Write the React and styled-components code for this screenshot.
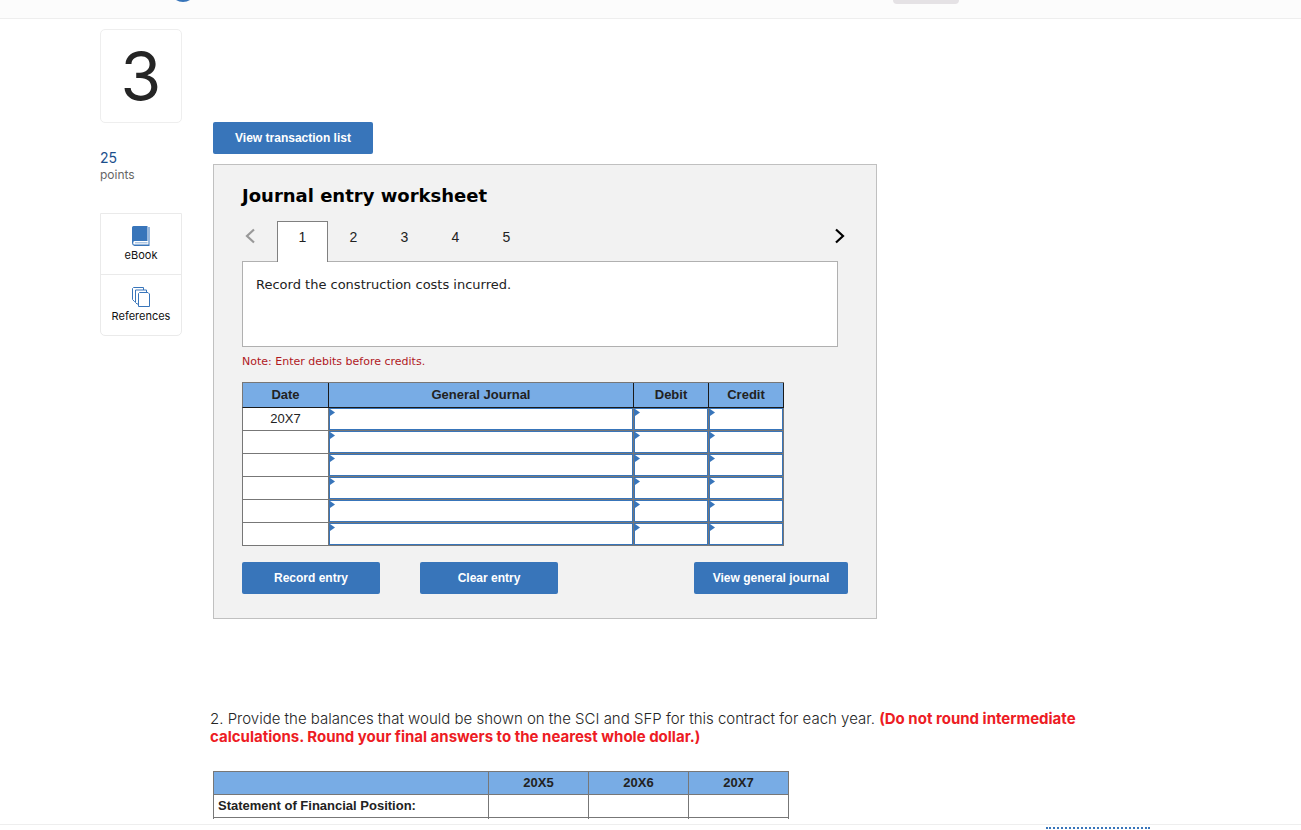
import React, { useState } from 'react';
import styled, { createGlobalStyle } from 'styled-components';

const TABS = [1, 2, 3, 4, 5];
const ENTRY_ROWS = ['20X7', '', '', '', '', ''];
const YEARS = ['20X5', '20X6', '20X7'];

export default function App() {
  const [activeTab, setActiveTab] = useState(1);

  return (
    <Page>
      <GlobalStyle />
      <TopBar>
        <LogoDot width="16" height="2" viewBox="0 0 16 2" aria-hidden="true">
          <path d="M1 0h14q-3 2-7 2T1 0z" fill="#3875ba" />
        </LogoDot>
        <TopPill />
      </TopBar>

      <Content>
        <Sidebar>
          <QuestionNumber>3</QuestionNumber>
          <Points>25</Points>
          <PointsLabel>points</PointsLabel>
          <Tools>
            <ToolButton type="button">
              <BookIcon />
              eBook
            </ToolButton>
            <ToolButton type="button">
              <ReferencesIcon />
              References
            </ToolButton>
          </Tools>
        </Sidebar>

        <Main>
          <WorksheetArea>
            <BlueButton type="button" $width={160}>View transaction list</BlueButton>
            <Worksheet>
              <Title>Journal entry worksheet</Title>
              <TabRow>
                <ArrowButton type="button" aria-label="Previous" disabled>
                  <Chevron d="M9 1.5 2 8l7 6.5" />
                </ArrowButton>
                <TabList>
                  {TABS.map((tab) => (
                    <Tab
                      key={tab}
                      type="button"
                      $active={tab === activeTab}
                      onClick={() => setActiveTab(tab)}
                    >
                      {tab}
                    </Tab>
                  ))}
                </TabList>
                <ArrowButton type="button" aria-label="Next">
                  <Chevron d="M2 1.5 9 8l-7 6.5" />
                </ArrowButton>
              </TabRow>
              <Description>Record the construction costs incurred.</Description>
              <Note>Note: Enter debits before credits.</Note>

              <JournalTable>
                <colgroup>
                  <Col $width={87} />
                  <Col $width={305} />
                  <Col $width={75} />
                  <Col $width={75} />
                </colgroup>
                <thead>
                  <tr>
                    <JournalHead>Date</JournalHead>
                    <JournalHead>General Journal</JournalHead>
                    <JournalHead>Debit</JournalHead>
                    <JournalHead>Credit</JournalHead>
                  </tr>
                </thead>
                <tbody>
                  {ENTRY_ROWS.map((date, index) => (
                    <tr key={index}>
                      <DateCell>{date}</DateCell>
                      <EntryCell label={`General Journal ${index + 1}`} />
                      <EntryCell label={`Debit ${index + 1}`} />
                      <EntryCell label={`Credit ${index + 1}`} />
                    </tr>
                  ))}
                </tbody>
              </JournalTable>

              <Actions>
                <ActionGroup>
                  <BlueButton type="button" $width={138}>Record entry</BlueButton>
                  <BlueButton type="button" $width={138}>Clear entry</BlueButton>
                </ActionGroup>
                <BlueButton type="button" $width={154}>View general journal</BlueButton>
              </Actions>
            </Worksheet>
          </WorksheetArea>

          <Question>
            2. Provide the balances that would be shown on the SCI and SFP for this contract for each year.{' '}
            <strong>
              (Do not round intermediate calculations. Round your final answers to the nearest whole dollar.)
            </strong>
          </Question>

          <BalanceTable>
            <colgroup>
              <Col $width={276} />
              <Col $width={100} />
              <Col $width={100} />
              <Col $width={100} />
            </colgroup>
            <thead>
              <tr>
                <BalanceHead />
                {YEARS.map((year) => (
                  <BalanceHead key={year}>{year}</BalanceHead>
                ))}
              </tr>
            </thead>
            <tbody>
              <tr>
                <BalanceLabel scope="row">Statement of Financial Position:</BalanceLabel>
                {YEARS.map((year) => (
                  <BalanceCell key={year} />
                ))}
              </tr>
              <tr>
                <BalanceLabel scope="row" />
                {YEARS.map((year) => (
                  <BalanceCell key={year} />
                ))}
              </tr>
            </tbody>
          </BalanceTable>
        </Main>
      </Content>

      <BottomBar>
        <DottedLine />
      </BottomBar>
    </Page>
  );
}

function Chevron({ d }) {
  return (
    <svg width="11" height="16" viewBox="0 0 11 16" fill="none" aria-hidden="true">
      <path d={d} stroke="currentColor" strokeWidth="2.2" />
    </svg>
  );
}

function EntryCell({ label }) {
  return (
    <InputCell>
      <EntryInput type="text" aria-label={label} />
      <Marker width="5" height="7" viewBox="0 0 5 7" aria-hidden="true">
        <path d="M0 0 5 3.5 0 7z" fill="#3875ba" />
      </Marker>
    </InputCell>
  );
}

function BookIcon() {
  return (
    <svg width="18" height="20" viewBox="0 0 18 20" aria-hidden="true">
      <path d="M1.500 0H15.500V15H2.500Q1.200 15 1.200 17T2.500 18.500H16.500V1H17.500V20H2.500Q0 19.500 0 17V1.500Q0 0 1.500 0z" fill="#3875ba" />
      <path d="M3 16.800H15.500" stroke="#3875ba" strokeOpacity="0.6" />
    </svg>
  );
}

function ReferencesIcon() {
  return (
    <svg width="18" height="20" viewBox="0 0 18 20" fill="#fff" stroke="#3875ba" aria-hidden="true">
      <path d="M1.500.5h10v14h-9l-2-2v-11z" />
      <path d="M3.500 3h11v14H5l-1.500-1.500z" />
      <path d="M7.500 5.500h8.500l1.500 1.500v12.500h-11v-13z" />
    </svg>
  );
}

const GlobalStyle = createGlobalStyle`
  * {
    box-sizing: border-box;
  }

  body {
    margin: 0;
    background: #fff;
    color: #252525;
    font-family: Inter, sans-serif;
  }

  button {
    cursor: pointer;
  }
`;

const Page = styled.div`
  display: flex;
  flex-direction: column;
  height: 100vh;
  overflow: hidden;
`;

const TopBar = styled.header`
  display: flex;
  flex: none;
  justify-content: space-between;
  height: 19px;
  padding: 0 342px 0 175px;
  background: #fcfcfc;
  border-bottom: 1px solid #eee;
`;

const LogoDot = styled.svg`
  flex: none;
`;

const TopPill = styled.div`
  width: 66px;
  height: 4px;
  background: #e5e2e5;
  border-radius: 0 0 10px 10px;
`;

const Content = styled.div`
  display: flex;
  flex: 1;
  min-height: 0;
  gap: 28px;
  padding: 10px 100px 0;
  margin-bottom: 5px;
  overflow: hidden;
`;

const Sidebar = styled.aside`
  flex: none;
  width: 82px;
`;

const QuestionNumber = styled.div`
  height: 94px;
  margin-bottom: 26px;
  border: 1px solid #eee;
  border-radius: 5px;
  font-size: 66px;
  line-height: 92px;
  text-align: center;
`;

const Points = styled.div`
  color: #1c4f8c;
  font-size: 14px;
  line-height: 18px;
`;

const PointsLabel = styled.div`
  color: #666;
  font-size: 12px;
  line-height: 16px;
`;

const Tools = styled.div`
  margin-top: 30px;
  border: 1px solid #eaeaea;
  border-radius: 0 0 5px 5px;
`;

const ToolButton = styled.button`
  display: flex;
  flex-direction: column;
  align-items: center;
  width: 100%;
  height: 60px;
  padding: 12px 0 0;
  background: none;
  border: none;
  color: #111;
  font-family: Inter, sans-serif;
  font-size: 11px;
  line-height: 18px;

  & + & {
    height: 61px;
    border-top: 1px solid #eaeaea;
  }
`;

const Main = styled.main`
  flex: 1;
  min-width: 0;
`;

const WorksheetArea = styled.section`
  max-width: 667px;
  padding: 93px 0 0 3px;
`;

const BlueButton = styled.button`
  width: ${({ $width }) => $width}px;
  height: 32px;
  padding: 0;
  background: #3875ba;
  border: none;
  border-radius: 2px;
  color: #fff;
  font-family: "Liberation Sans", sans-serif;
  font-size: 12px;
  font-weight: 700;
`;

const Worksheet = styled.div`
  margin-top: 10px;
  padding: 18px 28px 24px;
  background: #f2f2f2;
  border: 1px solid #c0c0c0;
  color: #000;
`;

const Title = styled.h1`
  margin: 0;
  font-family: "DejaVu Sans", sans-serif;
  font-size: 18px;
  line-height: 26px;
`;

const TabRow = styled.div`
  display: flex;
  height: 40px;
  margin-top: 12px;
`;

const ArrowButton = styled.button`
  display: flex;
  align-items: center;
  justify-content: center;
  width: 17px;
  height: 30px;
  padding: 0;
  background: none;
  border: none;
  color: #000;

  &:disabled {
    color: #999;
  }
`;

const TabList = styled.div`
  display: flex;
  flex: 1;
  margin-left: 18px;
`;

const Tab = styled.button`
  position: relative;
  z-index: 1;
  width: 51px;
  height: 41px;
  padding: 0 0 10px;
  background: ${({ $active }) => ($active ? '#fff' : 'transparent')};
  border: 1px solid ${({ $active }) => ($active ? '#808080' : 'transparent')};
  border-bottom: none;
  color: #222;
  font-family: "Liberation Sans", sans-serif;
  font-size: 14px;
`;

const Description = styled.div`
  height: 86px;
  margin-right: 10px;
  padding: 13px;
  background: #fff;
  border: 1px solid #b0b0b0;
  color: #222;
  font-family: "DejaVu Sans", sans-serif;
  font-size: 13px;
  line-height: 20px;
`;

const Note = styled.p`
  margin: 5px 0 10px;
  color: #b0181e;
  font-family: "DejaVu Sans", sans-serif;
  font-size: 11px;
  line-height: 20px;
`;

const DataTable = styled.table`
  table-layout: fixed;
  border-spacing: 0;
  border-top: 1px solid #777;
  background: #fff;
  color: #222;
  font-family: "Liberation Sans", sans-serif;
  font-size: 13px;

  th,
  td {
    border-right: 1px solid #777;
    border-bottom: 1px solid #777;
  }

  th:first-child,
  td:first-child {
    border-left: 1px solid #777;
  }
`;

const Col = styled.col`
  width: ${({ $width }) => $width}px;
`;

const JournalTable = styled(DataTable)`
  width: 542px;

  thead th {
    border-right-color: #1a1a1a;
    border-bottom-color: #1a1a1a;
  }
`;

const JournalHead = styled.th`
  height: 25px;
  padding: 0 0 2px;
  background: #78ace5;
`;

const DateCell = styled.td`
  height: 23px;
  padding: 0 0 2px;
  text-align: center;
`;

const InputCell = styled.td`
  position: relative;
  height: 23px;
  padding: 0;
`;

const EntryInput = styled.input`
  display: block;
  width: 100%;
  height: 22px;
  padding: 0 8px;
  background: #fff;
  border: 1px solid #3875ba;
  outline: none;
  font-size: 13px;
`;

const Marker = styled.svg`
  position: absolute;
  top: 1px;
  left: 1px;
`;

const Actions = styled.div`
  display: flex;
  justify-content: space-between;
  margin-top: 16px;
`;

const ActionGroup = styled.div`
  display: flex;
  gap: 40px;
`;

const Question = styled.p`
  max-width: 880px;
  margin: 91px 0 0;
  font-size: 15px;
  font-weight: 300;
  line-height: 18px;

  strong {
    color: #ed1c24;
    font-weight: 700;
  }
`;

const BalanceTable = styled(DataTable)`
  width: 576px;
  margin: 25px 0 0 3px;
`;

const BalanceHead = styled.th`
  height: 23px;
  padding: 0 0 2px;
  background: #78ace5;
`;

const BalanceLabel = styled.th`
  height: 23px;
  padding: 0 4px 2px;
  text-align: left;
`;

const BalanceCell = styled.td`
  padding: 0;
`;

const BottomBar = styled.footer`
  display: flex;
  flex: none;
  justify-content: flex-end;
  height: 6px;
  padding: 2px 151px 0 0;
  border-top: 1px solid #eee;
`;

const DottedLine = styled.div`
  width: 104px;
  border-top: 2px dotted #3875ba;
`;
